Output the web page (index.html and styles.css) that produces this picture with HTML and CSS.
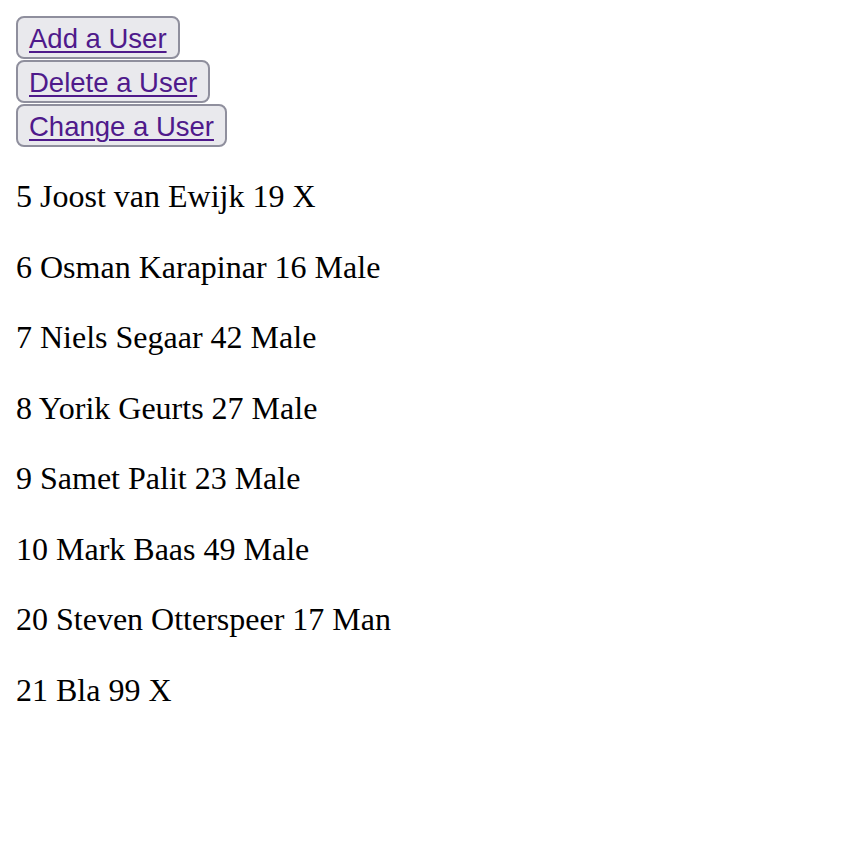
FILE: index.html
```html
<!DOCTYPE html>
<html>
<head>
<meta charset="utf-8">
<link rel="stylesheet" href="styles.css">
</head>
<body>
<div class="actions">
  <button class="btn"><a href="#" class="link">Add a User</a></button>
  <button class="btn"><a href="#" class="link">Delete a User</a></button>
  <button class="btn"><a href="#" class="link">Change a User</a></button>
</div>
<p class="row">5 Joost van Ewijk 19 X</p>
<p class="row">6 Osman Karapinar 16 Male</p>
<p class="row">7 Niels Segaar 42 Male</p>
<p class="row">8 Yorik Geurts 27 Male</p>
<p class="row">9 Samet Palit 23 Male</p>
<p class="row">10 Mark Baas 49 Male</p>
<p class="row">20 Steven Otterspeer 17 Man</p>
<p class="row">21 Bla 99 X</p>
</body>
</html>
```
FILE: styles.css
```css
html, body {
  margin: 0;
  background: #fff;
}
body {
  padding: 16px;
  font-family: "Liberation Serif", "Times New Roman", serif;
  font-size: 32px;
  color: #000;
}
.actions {
  display: flex;
  flex-direction: column;
  align-items: flex-start;
  gap: 1px;
  margin-bottom: -2px;
}
.btn {
  box-sizing: border-box;
  height: 43px;
  margin: 0;
  padding: 0 11px;
  background: #e9e9ed;
  border: 2px solid #8f8f9d;
  border-radius: 8px;
  font-family: "Liberation Sans", Arial, sans-serif;
  font-size: 27.5px;
  line-height: 42px;
}
.link {
  color: #4f1a8b;
  text-decoration: underline;
  text-decoration-thickness: 2px;
  text-underline-offset: 3px;
}
.row {
  margin: 32px 0;
  line-height: 38.5px;
}
```
